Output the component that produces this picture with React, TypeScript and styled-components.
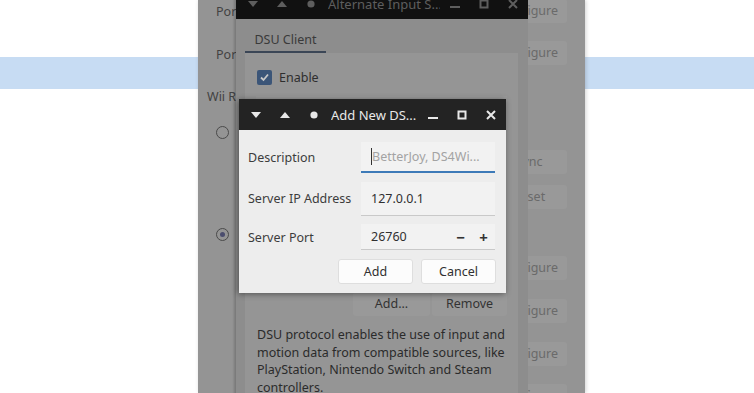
import styled, { createGlobalStyle } from "styled-components";

const GlobalStyle = createGlobalStyle`
    html, body {
        margin: 0;
        padding: 0;
        background: #ffffff;
        overflow: hidden;
    }
    body {
        font-family: "Noto Sans", "Open Sans", sans-serif;
        font-size: 12.5px;
    }
`;

const Desktop = styled.div`
    position: relative;
    width: 754px;
    height: 393px;
    overflow: hidden;
    background: #ffffff;
    padding-top: 57px;
    box-sizing: border-box;
`;

const Band = styled.div`
    height: 32px;
    background: #c7dcf3;
`;

/* ---------- the dimmed controller window behind ---------- */

const MainWindow = styled.div`
    position: absolute;
    left: 198px;
    top: 0;
    width: 387px;
    height: 393px;
    background: #949494;
    display: flex;
    justify-content: space-between;
    box-shadow: 1px 0 4px rgba(0, 0, 0, 0.18);
    color: #424242;
`;

const LeftCol = styled.div`
    display: flex;
    flex-direction: column;
    align-items: flex-start;
`;

const DimLabel = styled.div<{ $top: number; $left: number }>`
    margin-top: ${(p) => p.$top}px;
    margin-left: ${(p) => p.$left}px;
    height: 18px;
    line-height: 18px;
    white-space: nowrap;
`;

const Radio = styled.div<{ $top: number; $checked?: boolean }>`
    margin-top: ${(p) => p.$top}px;
    margin-left: 18px;
    width: 13px;
    height: 13px;
    border-radius: 50%;
    border: 1.5px solid #4a4a4a;
    box-sizing: border-box;
    display: flex;
    align-items: center;
    justify-content: center;
    &::after {
        content: "";
        display: ${(p) => (p.$checked ? "block" : "none")};
        width: 5px;
        height: 5px;
        border-radius: 50%;
        background: #4b4d6e;
    }
`;

const RightCol = styled.div`
    display: flex;
    flex-direction: column;
    padding-right: 18px;
    margin-top: -1px;
`;

const DimButton = styled.div<{ $top: number }>`
    margin-top: ${(p) => p.$top}px;
    width: 80px;
    height: 24px;
    box-sizing: border-box;
    padding-left: 4px;
    border-radius: 3px;
    background: #999999;
    color: #6a6a6a;
    line-height: 24px;
    text-align: center;
`;

/* ---------- window chrome ---------- */

const TitleBar = styled.div<{ $dark: string; $fg: string }>`
    height: 31px;
    flex: none;
    background: ${(p) => p.$dark};
    color: ${(p) => p.$fg};
    display: flex;
    align-items: center;
    padding: 0 1px 0 2px;
`;

const TitleIcon = styled.div`
    width: 29px;
    height: 31px;
    display: flex;
    align-items: center;
    justify-content: center;
    flex: none;
`;

const TitleText = styled.div`
    flex: 1;
    margin-left: 3px;
    white-space: nowrap;
    overflow: hidden;
    font-size: 13px;
`;

const Chrome = ({ title, bg, fg }: { title: string; bg: string; fg: string }) => (
    <TitleBar $dark={bg} $fg={fg}>
        <TitleIcon>
            <svg width="10" height="6" viewBox="0 0 10 6">
                <path d="M0 0 H10 L5 6 Z" fill={fg} />
            </svg>
        </TitleIcon>
        <TitleIcon>
            <svg width="10" height="6" viewBox="0 0 10 6">
                <path d="M0 6 H10 L5 0 Z" fill={fg} />
            </svg>
        </TitleIcon>
        <TitleIcon>
            <svg width="8" height="8" viewBox="0 0 8 8">
                <circle cx="4" cy="4" r="3.6" fill={fg} />
            </svg>
        </TitleIcon>
        <TitleText>{title}</TitleText>
        <TitleIcon>
            <svg width="10" height="10" viewBox="0 0 10 10">
                <rect x="0" y="7" width="10" height="2" fill={fg} />
            </svg>
        </TitleIcon>
        <TitleIcon>
            <svg width="10" height="10" viewBox="0 0 10 10">
                <rect x="1.5" y="1.5" width="7" height="7" fill="none" stroke={fg} strokeWidth="2" />
            </svg>
        </TitleIcon>
        <TitleIcon>
            <svg width="10" height="10" viewBox="0 0 10 10">
                <path d="M1 1 L9 9 M9 1 L1 9" stroke={fg} strokeWidth="2" />
            </svg>
        </TitleIcon>
    </TitleBar>
);

/* ---------- alternate input sources window ---------- */

const AltWindow = styled.div`
    position: absolute;
    left: 236px;
    top: -12px;
    width: 292px;
    height: 420px;
    background: #8d8d8d;
    display: flex;
    flex-direction: column;
    box-shadow: -2px 0 2px rgba(0, 0, 0, 0.18);
    color: #2e2e2e;
`;

const TabRow = styled.div`
    display: flex;
    padding-left: 9px;
    height: 34px;
    align-items: flex-end;
`;

const Tab = styled.div`
    width: 81px;
    height: 24px;
    padding-top: 2px;
    box-sizing: border-box;
    border-bottom: 2px solid #3b4656;
    text-align: center;
    color: #3a3a3a;
    line-height: 18px;
`;

const TabPanel = styled.div`
    margin: 0 10px 0 9px;
    flex: 1;
    background: #959595;
    padding: 16px 11px 0 11px;
    display: flex;
    flex-direction: column;
`;

const CheckRow = styled.div`
    display: flex;
    align-items: center;
    gap: 7px;
    height: 17px;
    margin-left: 1px;
`;

const CheckBox = styled.div`
    width: 15px;
    height: 15px;
    border-radius: 2px;
    background: #3b5578;
    display: flex;
    align-items: center;
    justify-content: center;
`;

const ListBox = styled.div`
    margin-top: 10px;
    height: 190px;
    background: #999999;
`;

const ButtonRow = styled.div`
    display: flex;
    justify-content: flex-end;
    gap: 2px;
    margin-top: 6px;
`;

const PanelButton = styled.div<{ $w: number }>`
    width: ${(p) => p.$w}px;
    height: 24px;
    border-radius: 3px;
    background: #999999;
    line-height: 24px;
    text-align: center;
    color: #333;
`;

const Paragraph = styled.p`
    margin: 10px 0 0 1px;
    line-height: 17.5px;
    color: #2b2b2b;
`;

/* ---------- add new dsu server dialog ---------- */

const Dialog = styled.div`
    position: absolute;
    left: 239px;
    top: 99px;
    width: 267px;
    height: 194px;
    background: #ededed;
    display: flex;
    flex-direction: column;
    box-shadow: -1px 1px 6px rgba(0, 0, 0, 0.45);
`;

const Form = styled.div`
    display: grid;
    grid-template-columns: 113px 134px;
    grid-template-rows: 31px 34px 26px 25px;
    row-gap: 8.5px;
    padding: 12px 0 0 9px;
    color: #3c3c3c;
`;

const Label = styled.div`
    display: flex;
    align-items: center;
    white-space: nowrap;
`;

const Field = styled.div<{ $focus?: boolean; $spin?: boolean }>`
    display: flex;
    align-items: center;
    padding: ${(p) => (p.$spin ? "0 0 0 10px" : "0 10px")};
    background: #f2f2f2;
    border-bottom: ${(p) => (p.$focus ? "2px solid #3d7ab8" : "1px solid #c9c9c9")};
    color: #303030;
`;

const Placeholder = styled.span`
    color: #a3a3a3;
    border-left: 1px solid #333;
`;

const SpinValue = styled.span`
    flex: 1;
`;

const SpinBtn = styled.span`
    width: 23px;
    text-align: center;
    font-size: 15px;
    font-weight: 700;
    color: #333;
`;

const Actions = styled.div`
    grid-column: 1 / span 2;
    display: flex;
    justify-content: flex-end;
    gap: 8px;
    margin-right: -1px;
`;

const DialogButton = styled.div`
    width: 75px;
    height: 25px;
    box-sizing: border-box;
    border-radius: 3px;
    background: #fcfcfc;
    border: 1px solid #dedede;
    line-height: 23px;
    text-align: center;
    color: #303030;
`;

export default function App() {
    return (
        <>
            <GlobalStyle />
            <Desktop>
                <Band />

                <MainWindow>
                    <LeftCol>
                        <DimLabel $top={3} $left={18}>Por</DimLabel>
                        <DimLabel $top={25} $left={18}>Por</DimLabel>
                        <DimLabel $top={24} $left={9}>Wii R</DimLabel>
                        <Radio $top={20} />
                        <Radio $top={89} $checked />
                    </LeftCol>
                    <RightCol>
                        <DimButton $top={0}>Configure</DimButton>
                        <DimButton $top={18}>Configure</DimButton>
                        <DimButton $top={85}>Sync</DimButton>
                        <DimButton $top={11}>Reset</DimButton>
                        <DimButton $top={47}>Configure</DimButton>
                        <DimButton $top={19}>Configure</DimButton>
                        <DimButton $top={19}>Configure</DimButton>
                        <DimButton $top={18}>Configure</DimButton>
                    </RightCol>
                </MainWindow>

                <AltWindow>
                    <Chrome title="Alternate Input S..." bg="#111111" fg="#5e5e5e" />
                    <TabRow>
                        <Tab>DSU Client</Tab>
                    </TabRow>
                    <TabPanel>
                        <CheckRow>
                            <CheckBox>
                                <svg width="11" height="11" viewBox="0 0 11 11">
                                    <path d="M2 5.5 L4.5 8 L9 2.5" fill="none" stroke="#c8c8c8" strokeWidth="1.8" />
                                </svg>
                            </CheckBox>
                            Enable
                        </CheckRow>
                        <ListBox />
                        <ButtonRow>
                            <PanelButton $w={77}>Add...</PanelButton>
                            <PanelButton $w={75}>Remove</PanelButton>
                        </ButtonRow>
                        <Paragraph>
                            DSU protocol enables the use of input and motion data from compatible
                            sources, like PlayStation, Nintendo Switch and Steam controllers.
                        </Paragraph>
                    </TabPanel>
                </AltWindow>

                <Dialog>
                    <Chrome title="Add New DS..." bg="#232323" fg="#e8e8e8" />
                    <Form>
                        <Label>Description</Label>
                        <Field $focus>
                            <Placeholder>BetterJoy, DS4Wi...</Placeholder>
                        </Field>
                        <Label>Server IP Address</Label>
                        <Field>127.0.0.1</Field>
                        <Label>Server Port</Label>
                        <Field $spin>
                            <SpinValue>26760</SpinValue>
                            <SpinBtn>−</SpinBtn>
                            <SpinBtn>+</SpinBtn>
                        </Field>
                        <Actions>
                            <DialogButton>Add</DialogButton>
                            <DialogButton>Cancel</DialogButton>
                        </Actions>
                    </Form>
                </Dialog>
            </Desktop>
        </>
    );
}
